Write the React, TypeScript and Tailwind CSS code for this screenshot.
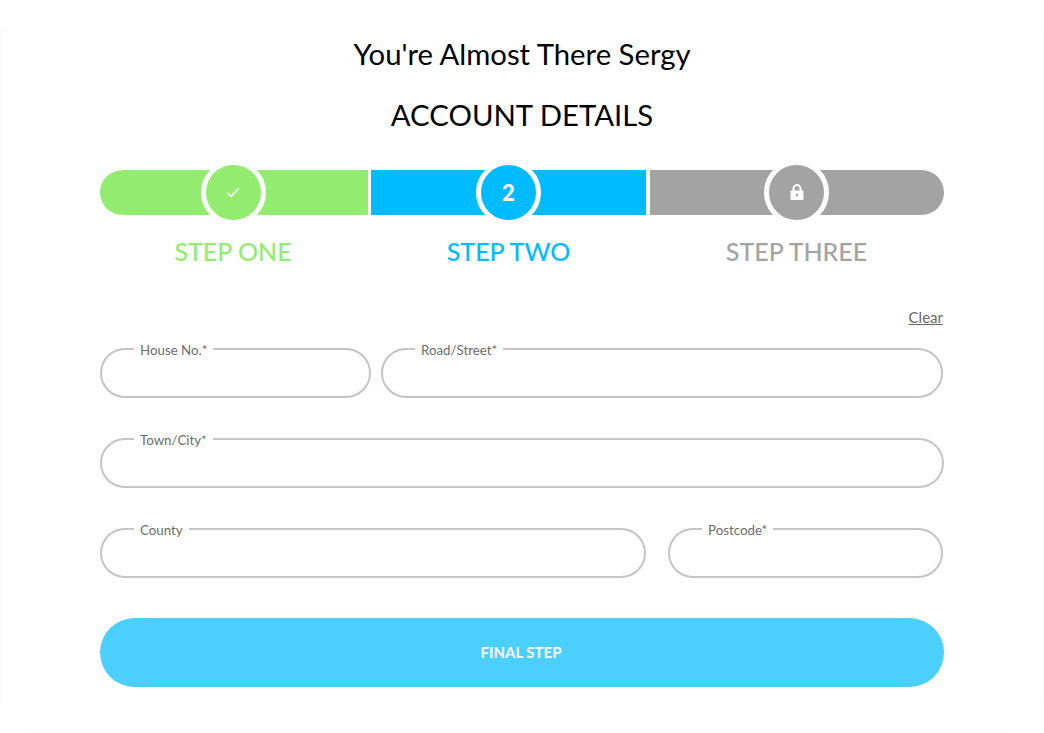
import { Check } from "lucide-react";

const FONT = "font-['Lato','Noto_Sans',sans-serif]";

function Field({ label, className }: { label: string; className: string }) {
  return (
    <div className={`relative h-[50px] rounded-[25px] border-2 border-[#c4c4c4] ${className}`}>
      <label className="absolute left-[32px] top-[-8px] bg-white px-[6px] text-[13.3px] leading-[16px] text-[#6b6b6b]">
        {label}
      </label>
    </div>
  );
}

function LockIcon() {
  return (
    <svg width="14" height="16" viewBox="0 0 14 16" className="mb-[1px]">
      <path d="M3.5 7.5V4.6a3.5 3.5 0 0 1 7 0v2.9" fill="none" stroke="#fff" strokeWidth="2" />
      <path
        fillRule="evenodd"
        fill="#fff"
        d="M1.5 6.5h11a1 1 0 0 1 1 1V15a1 1 0 0 1-1 1h-11a1 1 0 0 1-1-1V7.500a1 1 0 0 1 1-1ZM7 9.800a1.300 1.300 0 1 0 0 2.600a1.300 1.300 0 0 0 0-2.600Z"
      />
    </svg>
  );
}

export default function App() {
  return (
    <div className={`${FONT} relative h-[733px] overflow-hidden bg-white`}>
      <div className="absolute left-0 right-0 top-[28px] h-[675px] border-x border-[#f8f8f8]" />
      <div className="absolute bottom-0 left-[27px] h-px w-[988px] bg-[#fafafa]" />
      <div className="relative mx-auto w-[844px] pt-[30px]">
        <h1 className="h-[48px] text-center text-[29.3px] leading-[48px] text-black">You're Almost There Sergy</h1>
        <h2 className="mt-[13px] h-[48px] text-center text-[29.3px] leading-[48px] text-black">ACCOUNT DETAILS</h2>

        <div className="mt-[31px] flex h-[45px] gap-[3px]">
          <div className="flex w-[268px] items-center justify-center rounded-l-[23px] bg-[#93ec6f] pr-[2px]">
            <span className="z-10 flex size-[65px] items-center justify-center rounded-full border-[5px] border-white bg-[#93ec6f]">
              <Check size={16} strokeWidth={2.5} className="text-white" />
            </span>
          </div>
          <div className="flex w-[275px] items-center justify-center bg-[#00bbff]">
            <span className="z-10 flex size-[65px] items-center justify-center rounded-full border-[5px] border-white bg-[#00bbff] pb-[1px] text-[22px] font-black text-white">
              2
            </span>
          </div>
          <div className="ml-[1px] flex w-[294px] items-center justify-center rounded-r-[23px] bg-[#a3a3a3] pr-[1px]">
            <span className="z-10 flex size-[65px] items-center justify-center rounded-full border-[5px] border-white bg-[#a3a3a3]">
              <LockIcon />
            </span>
          </div>
        </div>

        <div className="mt-[20px] flex text-center text-[25px] font-medium leading-[32px]">
          <div className="w-[266px] text-[#93ec6f]">STEP ONE</div>
          <div className="ml-[5px] w-[275px] text-[#00bbff]">STEP TWO</div>
          <div className="ml-[4px] w-[293px] text-[#a3a3a3]">STEP THREE</div>
        </div>

        <div className="mt-[40px] h-[20px] text-right text-[15px] leading-[20px] text-[#666]">
          <a className="pr-[1px] underline">Clear</a>
        </div>

        <div className="mt-[21px] flex flex-col gap-[40px]">
          <div className="flex gap-[10px]">
            <Field label="House No.*" className="w-[271px]" />
            <Field label="Road/Street*" className="w-[562px]" />
          </div>
          <div className="flex">
            <Field label="Town/City*" className="w-[844px]" />
          </div>
          <div className="flex gap-[22px]">
            <Field label="County" className="w-[546px]" />
            <Field label="Postcode*" className="w-[275px]" />
          </div>
        </div>

        <button className="mt-[40px] flex h-[69px] w-[844px] items-center justify-center rounded-[35px] bg-[#4bcfff] pr-[2px] text-[15px] font-bold text-white">
          FINAL STEP
        </button>
      </div>
    </div>
  );
}
